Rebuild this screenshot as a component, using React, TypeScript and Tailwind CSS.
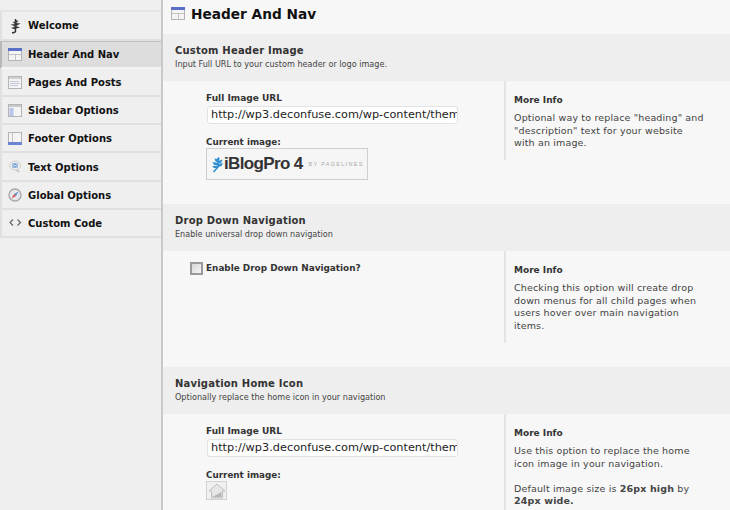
const font = "font-['DejaVu_Sans','Liberation_Sans',sans-serif]";

const WelcomeIcon = () => (
  <svg width="14" height="16" viewBox="0 0 14 16" className="block">
    <path d="M7.5 1 V14 M7.5 14 L4 15" stroke="#333" strokeWidth="1.4" fill="none" />
    <path d="M7.5 2 L10.5 3 L8 5 L12.5 5.5 L8 8 L12 9.5 L8 10.5 Z" fill="#333" />
    <path d="M7.5 3.5 L4.5 4 L7 6 L2.5 6.5 L7 8.5 L3 10 L7 11.5 Z" fill="#444" />
  </svg>
);

const WindowIcon = ({ kind }: { kind: "header" | "footer" | "pages" | "sidebar" }) => (
  <svg width="14" height="13" viewBox="0 0 14 13" className="block">
    <rect x="0.5" y="0.5" width="13" height="12" fill="#f4f4f4" stroke="#b4b4b4" />
    {kind === "header" && (
      <>
        <rect x="0" y="0" width="14" height="3" fill="#5a6fc8" />
        <path d="M1 6.5 H13 M7.5 7 V12" stroke="#c4c4c4" />
      </>
    )}
    {kind === "footer" && (
      <>
        <rect x="0" y="10" width="14" height="3" fill="#6d84d4" />
        <path d="M4.5 1 V10" stroke="#c4c4c4" />
      </>
    )}
    {kind === "pages" && (
      <>
        <rect x="1" y="1" width="12" height="2" fill="#d0d0d0" />
        <path d="M2 5.5 H11 M2 7.5 H12 M2 9.5 H10" stroke="#c3c8d8" />
      </>
    )}
    {kind === "sidebar" && (
      <>
        <rect x="1" y="1" width="12" height="2" fill="#c9c9c9" />
        <rect x="1.5" y="4" width="4" height="8" fill="#b9c4ea" />
      </>
    )}
  </svg>
);

const TextIcon = () => (
  <svg width="14" height="14" viewBox="0 0 14 14" className="block">
    <path d="M8 9.5 C9 11 10 11.5 11.5 11.5" fill="none" stroke="#c4c4c4" strokeWidth="1.4" />
    <ellipse cx="7" cy="5.5" rx="5.5" ry="4.5" fill="#ececec" stroke="#d0d0d0" />
    <rect x="4.5" y="3.5" width="5" height="4" fill="#3f7fc4" />
    <path d="M5 4.5 L9 6.5 M9 4.5 L5 6.5" stroke="#e8f0fa" />
  </svg>
);

const GlobalIcon = () => (
  <svg width="14" height="14" viewBox="0 0 14 14" className="block">
    <circle cx="7" cy="7" r="6" fill="#e4e8ec" stroke="#a8a8a8" strokeWidth="1.4" />
    <path d="M10.5 3.5 L6 6 L8 8 Z" fill="#5b8fd0" />
    <path d="M3.5 10.5 L8 8 L6 6 Z" fill="#d9534f" />
  </svg>
);

const CodeIcon = () => (
  <svg width="14" height="14" viewBox="0 0 14 14" fill="none" stroke="#666" strokeWidth="1.2" className="block">
    <path d="M5 3.5 L2 6.5 L5 9.5 M9.5 3.5 L12.5 6.5 L9.5 9.5" />
  </svg>
);

const navItems = [
  { label: "Welcome", icon: <WelcomeIcon />, height: "h-[29px]" },
  { label: "Header And Nav", icon: <WindowIcon kind="header" />, height: "h-[28px]", active: true },
  { label: "Pages And Posts", icon: <WindowIcon kind="pages" />, height: "h-[28px]" },
  { label: "Sidebar Options", icon: <WindowIcon kind="sidebar" />, height: "h-[28px]" },
  { label: "Footer Options", icon: <WindowIcon kind="footer" />, height: "h-[28px]" },
  { label: "Text Options", icon: <TextIcon />, height: "h-[29px] pt-[1px]" },
  { label: "Global Options", icon: <GlobalIcon />, height: "h-[28px]" },
  { label: "Custom Code", icon: <CodeIcon />, height: "h-[28px]" },
];

const Sidebar = () => (
  <div className="w-[163px] shrink-0 bg-[#efefef] border-r-2 border-[#c9c9c9] pt-[10px] h-full">
    <div className="border-t-2 border-[#e4e4e4]">
      {navItems.map((item) => (
        <div
          key={item.label}
          className={`${item.height} flex items-center border-b-2 ${
            item.active
              ? "bg-[#dddddd] border-l-2 border-l-[#b8b8b8] border-t border-t-[#bdbdbd] border-b-[#f4f4f4]"
              : "border-[#e0e0e0] border-l-2 border-l-[#e0e0e0]"
          }`}
        >
          <div className="w-[26px] pl-[6px] flex justify-start shrink-0">{item.icon}</div>
          <span className="text-[10px] font-bold text-[#111]">{item.label}</span>
        </div>
      ))}
    </div>
  </div>
);

const SectionHeader = ({ title, sub }: { title: string; sub: string }) => (
  <div className="h-[47px] bg-[#eeeeee] pl-[12px] pt-[10px]">
    <div className="text-[10px] leading-[13px] font-bold text-[#333] tracking-[0.2px]">{title}</div>
    <div className="text-[8.1px] leading-[12px] mt-[1px] text-[#444]">{sub}</div>
  </div>
);

const UrlField = () => (
  <>
    <div className="text-[9px] leading-[12px] font-bold text-[#333]">Full Image URL</div>
    <div className="mt-[2px] ml-[1px] w-[251px] h-[18px] bg-white border border-[#e2e2e2] rounded-[3px] pl-[3px] text-[11.3px] leading-[16px] text-[#222] overflow-hidden whitespace-nowrap">
      http://wp3.deconfuse.com/wp-content/them
    </div>
  </>
);

const Leaf = () => (
  <svg width="11" height="17" viewBox="0 0 11 17" className="block">
    <path d="M6 2 V11 L1.5 16" stroke="#2f8fd0" strokeWidth="1.6" fill="none" />
    <path d="M6 0.5 L8 3 L6 4.5 Z M6 5 L10.5 3.5 L9.5 6.5 L6 7.5 Z M6 8 L11 7 L9.5 10 L6 11 Z" fill="#2f8fd0" />
    <path d="M6 3 L2.5 2.5 L3.5 5.5 L6 6.5 Z M6 7 L0.5 6 L2 9 L6 9.5 Z M5.5 10 L0 10 L2 12 L5 12 Z" fill="#2f8fd0" />
  </svg>
);

const HomeThumb = () => (
  <div className="w-[21px] h-[19px] border border-[#d2d2d2] bg-[#f0f0f0] flex items-center justify-center">
    <svg width="18" height="16" viewBox="0 0 18 16" className="block">
      <path d="M9 1 L17 8 L14.5 8 L14.5 15 L3.5 15 L3.5 8 L1 8 Z" fill="#e6e6e6" stroke="#bdbdbd" />
      <path d="M4.5 14 L13.5 9 L13.5 14 Z" fill="#b5b5b5" />
    </svg>
  </div>
);

const MoreInfo = ({ children, height }: { children: React.ReactNode; height: string }) => (
  <div className={`w-[226px] shrink-0 border-l-2 border-[#e4e4e4] pl-[8px] pt-[13px] pr-[24px] ${height}`}>
    <div className="text-[9px] leading-[13px] font-bold text-[#333]">More Info</div>
    <div className="mt-[5px] text-[9.5px] leading-[12.6px] text-[#444] tracking-[0.15px]">{children}</div>
  </div>
);

export default function App() {
  return (
    <div className={`w-[730px] h-[510px] flex overflow-hidden bg-[#f7f7f7] ${font}`}>
      <Sidebar />
      <div className="flex-1 min-w-0">
        <div className="h-[34px] flex items-start pt-[6px] pl-[8px] gap-[6px]">
          <div className="pt-[1px]">
            <WindowIcon kind="header" />
          </div>
          <span className="text-[13.7px] leading-[17px] font-bold text-[#111]">Header And Nav</span>
        </div>

        <SectionHeader title="Custom Header Image" sub="Input Full URL to your custom header or logo image." />
        <div className="h-[123px] flex">
          <div className="w-[341px] shrink-0 pl-[43px] pt-[11px]">
            <UrlField />
            <div className="mt-[12px] text-[8.8px] leading-[12px] font-bold text-[#333]">Current image:</div>
            <div className="w-[162px] h-[32px] border border-[#cfcfcf] bg-[#f5f5f5] flex items-center pl-[5px]">
              <Leaf />
              <span className="ml-[1px] text-[17px] font-bold tracking-[-0.65px] text-[#333] font-['Liberation_Sans',sans-serif]">
                iBlogPro 4
              </span>
              <span className="ml-[6px] text-[5.5px] tracking-[1.3px] text-[#aaa] font-['Liberation_Sans',sans-serif]">
                BY PAGELINES
              </span>
            </div>
          </div>
          <MoreInfo height="h-[79px]">
            Optional way to replace "heading" and "description" text for your website with an image.
          </MoreInfo>
        </div>

        <SectionHeader title="Drop Down Navigation" sub="Enable universal drop down navigation" />
        <div className="h-[116px] flex">
          <div className="w-[341px] shrink-0 pl-[27px] pt-[11px] flex items-start gap-[3px]">
            <div className="w-[13px] h-[13px] border-2 border-[#9a9a9a] bg-gradient-to-br from-[#d8d8d8] to-[#f4f4f4]" />
            <span className="text-[8.9px] leading-[12px] font-bold text-[#333]">Enable Drop Down Navigation?</span>
          </div>
          <MoreInfo height="h-[92px]">
            Checking this option will create drop down menus for all child pages when users hover over main navigation items.
          </MoreInfo>
        </div>

        <SectionHeader title="Navigation Home Icon" sub="Optionally replace the home icon in your navigation" />
        <div className="h-[96px] flex">
          <div className="w-[341px] shrink-0 pl-[43px] pt-[11px]">
            <UrlField />
            <div className="mt-[12px] text-[8.8px] leading-[12px] font-bold text-[#333]">Current image:</div>
            <HomeThumb />
          </div>
          <MoreInfo height="h-[96px]">
            Use this option to replace the home icon image in your navigation.
            <br />
            <br />
            Default image size is <b>26px high</b> by <b>24px wide.</b>
          </MoreInfo>
        </div>
      </div>
    </div>
  );
}
